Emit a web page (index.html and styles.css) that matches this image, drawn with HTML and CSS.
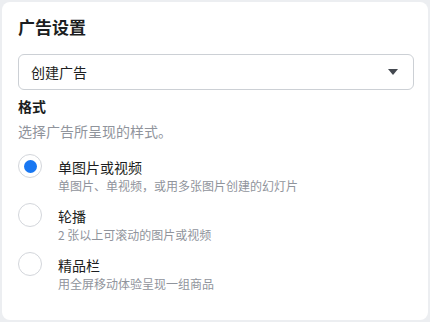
FILE: index.html
```html
<!DOCTYPE html>
<html lang="zh-CN">
<head>
<meta charset="utf-8">
<title>广告设置</title>
<link rel="stylesheet" href="styles.css">
</head>
<body>
<div class="card">
  <h2 class="title">广告设置</h2>
  <div class="select">
    <span class="select-text">创建广告</span>
    <svg class="caret" width="10" height="6" viewBox="0 0 10 6"><path d="M0 0H10L5 6Z" fill="#444950"/></svg>
  </div>
  <div class="section-label">格式</div>
  <div class="section-desc">选择广告所呈现的样式。</div>
  <div class="options">
    <div class="option">
      <span class="radio checked"></span>
      <div class="option-text">
        <div class="option-label">单图片或视频</div>
        <div class="option-desc">单图片、单视频，或用多张图片创建的幻灯片</div>
      </div>
    </div>
    <div class="option">
      <span class="radio"></span>
      <div class="option-text">
        <div class="option-label">轮播</div>
        <div class="option-desc">2 张以上可滚动的图片或视频</div>
      </div>
    </div>
    <div class="option">
      <span class="radio"></span>
      <div class="option-text">
        <div class="option-label">精品栏</div>
        <div class="option-desc">用全屏移动体验呈现一组商品</div>
      </div>
    </div>
  </div>
</div>
</body>
</html>
```

FILE: styles.css
```css
html, body {
  margin: 0;
  padding: 0;
}
body {
  background: #eceef1;
  font-family: "Noto Sans CJK SC", "Noto Sans", "Liberation Sans", sans-serif;
  color: #1c1e21;
  padding: 2px;
  width: 430px;
  height: 322px;
  box-sizing: border-box;
}
.card {
  width: 426px;
  height: 318px;
  box-sizing: border-box;
  background: #ffffff;
  border-radius: 8px;
  padding: 14px 14px 0 16px;
}
.title {
  margin: 0;
  font-size: 17px;
  line-height: 22px;
  font-weight: 600;
  color: #1c1e21;
}
.select {
  margin-top: 16px;
  height: 36px;
  box-sizing: border-box;
  border: 1px solid #ccd0d5;
  border-radius: 6px;
  display: flex;
  align-items: center;
  justify-content: space-between;
  padding: 0 15px 0 12px;
}
.select-text {
  font-size: 14px;
  line-height: 20px;
  color: #1c1e21;
}
.caret {
  display: block;
}
.section-label {
  margin-top: 6px;
  font-size: 14px;
  line-height: 20px;
  font-weight: 600;
  color: #1c1e21;
}
.section-desc {
  margin-top: 5px;
  font-size: 14px;
  line-height: 20px;
  color: #90949c;
}
.options {
  margin-top: 13px;
  display: flex;
  flex-direction: column;
  gap: 9px;
}
.option {
  display: flex;
  align-items: flex-start;
  height: 40px;
}
.radio {
  width: 24px;
  height: 24px;
  box-sizing: border-box;
  border: 1px solid #d3d6db;
  border-radius: 50%;
  margin-right: 16px;
  display: flex;
  align-items: center;
  justify-content: center;
  flex: none;
}
.radio.checked::after {
  content: "";
  width: 13px;
  height: 13px;
  border-radius: 50%;
  background: #1877f2;
}
.option-text {
  padding-top: 2px;
}
.option-label {
  font-size: 14px;
  line-height: 22px;
  color: #1c1e21;
}
.option-desc {
  font-size: 12px;
  line-height: 16px;
  color: #90949c;
}
```
